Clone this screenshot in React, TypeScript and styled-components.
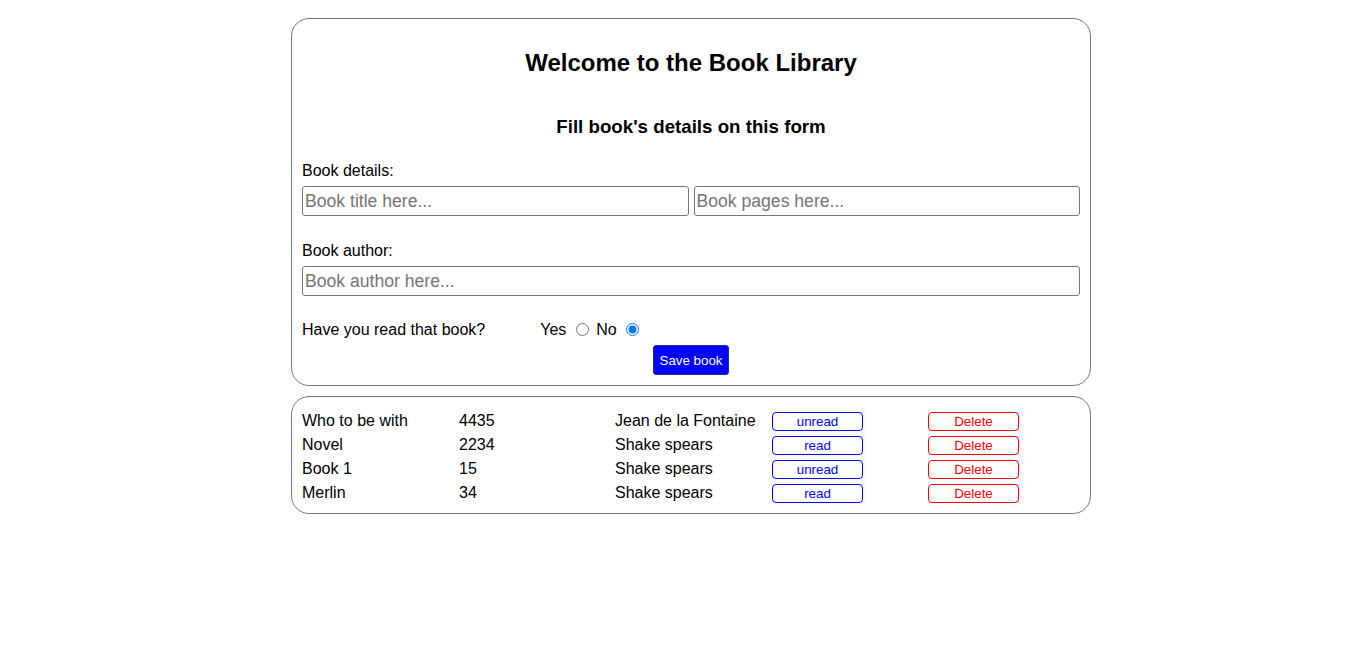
import React, { useState } from "react";
import styled, { createGlobalStyle } from "styled-components";

const GlobalStyle = createGlobalStyle`
  body {
    margin: 0;
    padding: 18px 0 0 16px;
    background: #fff;
    font-family: "Liberation Sans", Arial, sans-serif;
    color: #000;
  }
`;

const Page = styled.div`
  display: flex;
  flex-direction: column;
  align-items: center;
  gap: 10px;
`;

const Card = styled.div`
  width: 800px;
  box-sizing: border-box;
  border: 1px solid #767676;
  border-radius: 18px;
  padding: 0 10px 10px;
  display: flex;
  flex-direction: column;
`;

const ListCard = styled(Card)`
  padding: 12px 10px 8px;
`;

const Title = styled.h2`
  margin: 30px 0 0;
  font-size: 24px;
  line-height: 28px;
  text-align: center;
`;

const SubTitle = styled.h3`
  margin: 39px 0 0;
  font-size: 18.72px;
  line-height: 22px;
  text-align: center;
`;

const Label = styled.label<{ $top: number }>`
  display: block;
  margin-top: ${(p) => p.$top}px;
  font-size: 16px;
  line-height: 18px;
`;

const InputRow = styled.div`
  display: flex;
  gap: 5px;
  margin-top: 6px;
`;

const TextInput = styled.input`
  flex: 1;
  min-width: 0;
  height: 30px;
  box-sizing: border-box;
  border: 1px solid #767676;
  border-radius: 3px;
  padding: 1px 2px;
  font-family: "Liberation Sans", Arial, sans-serif;
  font-size: 17.6px;
  &::placeholder {
    color: #757575;
  }
`;

const RadioRow = styled.div`
  margin-top: 25px;
  font-size: 16px;
  line-height: 18px;
  display: flex;
  align-items: center;
`;

const RadioGroup = styled.span`
  margin-left: 55px;
  white-space: pre;
  input {
    margin: 0 3px 0 5px;
    width: 13px;
    height: 13px;
    vertical-align: -1px;
  }
`;

const SaveButton = styled.button`
  align-self: center;
  margin-top: 6px;
  width: 76px;
  height: 30px;
  background: #0000ff;
  color: #fff;
  border: 1px solid #2a2a8a;
  border-radius: 3px;
  font-family: "Liberation Sans", Arial, sans-serif;
  font-size: 13.33px;
  padding: 0;
`;

const BookRow = styled.div`
  display: grid;
  grid-template-columns: 157px 156px 157px 156px 1fr;
  height: 24px;
  align-items: center;
  font-size: 16px;
`;

const Cell = styled.div`
  white-space: nowrap;
`;

const RowButton = styled.button<{ $color: string }>`
  width: 91px;
  height: 19px;
  padding: 0;
  background: #fff;
  color: ${(p) => p.$color};
  border: 1px solid ${(p) => p.$color};
  border-radius: 4px;
  font-family: "Liberation Sans", Arial, sans-serif;
  font-size: 13.33px;
`;

type Book = { title: string; pages: number; author: string; read: boolean };

const books: Book[] = [
  { title: "Who to be with", pages: 4435, author: "Jean de la Fontaine", read: false },
  { title: "Novel", pages: 2234, author: "Shake spears", read: true },
  { title: "Book 1", pages: 15, author: "Shake spears", read: false },
  { title: "Merlin", pages: 34, author: "Shake spears", read: true },
];

const App: React.FC = () => {
  const [read, setRead] = useState(false);

  return (
    <Page>
      <GlobalStyle />
      <Card>
        <Title>Welcome to the Book Library</Title>
        <SubTitle>Fill book's details on this form</SubTitle>
        <Label $top={24}>Book details:</Label>
        <InputRow>
          <TextInput placeholder="Book title here..." />
          <TextInput placeholder="Book pages here..." />
        </InputRow>
        <Label $top={26}>Book author:</Label>
        <InputRow>
          <TextInput placeholder="Book author here..." />
        </InputRow>
        <RadioRow>
          <span>Have you read that book?</span>
          <RadioGroup>
            Yes
            {" "}
            <input type="radio" name="read" checked={read} onChange={() => setRead(true)} />
            {" "}No{" "}
            <input type="radio" name="read" checked={!read} onChange={() => setRead(false)} />
          </RadioGroup>
        </RadioRow>
        <SaveButton>Save book</SaveButton>
      </Card>
      <ListCard>
        {books.map((b) => (
          <BookRow key={b.title}>
            <Cell>{b.title}</Cell>
            <Cell>{b.pages}</Cell>
            <Cell>{b.author}</Cell>
            <Cell>
              <RowButton $color="#0000ff">{b.read ? "read" : "unread"}</RowButton>
            </Cell>
            <Cell>
              <RowButton $color="#ff0000">Delete</RowButton>
            </Cell>
          </BookRow>
        ))}
      </ListCard>
    </Page>
  );
};

export default App;
